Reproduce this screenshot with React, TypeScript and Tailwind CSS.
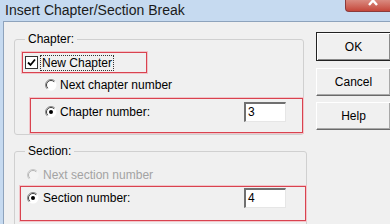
import React from "react";

function Radio({ checked = false, disabled = false }: { checked?: boolean; disabled?: boolean }) {
  return (
    <svg width="12" height="12" viewBox="0 0 12 12" className="shrink-0">
      <circle cx="6" cy="6" r="5.5" fill={disabled ? "#f4f4f4" : "#ffffff"} />
      <path d="M2.1 9.9 A5.5 5.5 0 0 1 9.9 2.1" stroke={disabled ? "#c8c8c8" : "#8a8a8a"} fill="none" />
      <path d="M2.8 9.2 A4.5 4.5 0 0 1 9.2 2.8" stroke={disabled ? "#b4b4b4" : "#404040"} fill="none" />
      {checked && <circle cx="6" cy="6" r="2" fill="#000" />}
    </svg>
  );
}

function Field({ value, right }: { value: string; right: string }) {
  return (
    <div
      className={
        "ml-auto w-[42px] h-[20px] bg-white border-t-2 border-l-2 border-r border-b border-t-[#707070] border-l-[#707070] border-r-[#e6e6e6] border-b-[#e6e6e6] pl-[2px] text-[12px] leading-[17px] " +
        right
      }
    >
      {value}
    </div>
  );
}

export default function App() {
  return (
    <div className="w-[390px] h-[224px] overflow-hidden flex flex-col bg-[#c6daf0] font-['Liberation_Sans',Arial,sans-serif] text-black">
      {/* title bar */}
      <div className="h-[21px] flex shrink-0">
        <div className="pl-[5px] text-[14px] leading-[21px] text-[#1a1a1a]">Insert Chapter/Section Break</div>
        <div className="ml-auto w-[45px] h-[12px] rounded-bl-[4px] border-l border-b border-[#8c3a3a] bg-gradient-to-b from-[#d98a80] to-[#c4463a] overflow-hidden">
          <svg width="45" height="12" viewBox="0 0 45 12">
            <path d="M23 -4 L31 5 M31 -4 L23 5" stroke="#fff" strokeWidth="2.4" />
          </svg>
        </div>
      </div>

      {/* body */}
      <div className="flex-1 ml-[3px] border-l border-t border-[#8ea3bc] bg-[#f0f0f0] flex text-[12px]">
        <div className="pl-[10px] pt-[10px] flex flex-col">
          <fieldset className="w-[288px] h-[103px] border border-[#d0d0d0] rounded-[3px] pl-[7px] pt-[6px]">
            <legend className="ml-[3px] px-[3px] leading-[14px]">Chapter:</legend>
            <div className="w-[125px] h-[21px] border border-[#d9424f] shadow-[0_0_0_1px_#f2c4c9] flex items-center pl-[2px]">
              <div className="w-[13px] h-[13px] bg-white border border-[#333] flex items-center justify-center">
                <svg width="9" height="9" viewBox="0 0 9 9">
                  <path d="M1 4.5 L3.5 7 L8 1.5" stroke="#000" strokeWidth="1.8" fill="none" />
                </svg>
              </div>
              <span className="ml-[3px] px-[1px] outline outline-1 outline-dotted outline-[#333] leading-[14px]">New Chapter</span>
            </div>
            <div className="mt-[2px] h-[20px] flex items-center ml-[23px] gap-[3px]">
              <Radio />
              <span>Next chapter number</span>
            </div>
            <div className="mt-[3px] ml-[8px] w-[273px] h-[35px] border border-[#d9424f] shadow-[0_0_0_1px_#f2c4c9] pt-[3px]">
              <div className="h-[20px] flex items-center pl-[14px] gap-[3px]">
                <Radio checked />
                <span>Chapter number:</span>
                <Field value="3" right="mr-[16px]" />
              </div>
            </div>
          </fieldset>

          <fieldset className="mt-[9px] w-[287px] h-[86px] border border-[#d0d0d0] rounded-[3px] pl-[5px] pt-[7px]">
            <legend className="ml-[5px] px-[3px] leading-[14px]">Section:</legend>
            <div className="h-[20px] flex items-center ml-[7px] gap-[4px] text-[#a3a3a3]">
              <Radio disabled />
              <span>Next section number</span>
            </div>
            <div className="mt-[1px] w-[286px] h-[35px] border border-[#d9424f] shadow-[0_0_0_1px_#f2c4c9] pt-[1px]">
              <div className="h-[20px] flex items-center pl-[6px] gap-[4px]">
                <Radio checked />
                <span>Section number:</span>
                <Field value="4" right="mr-[19px]" />
              </div>
            </div>
          </fieldset>
        </div>

        <div className="ml-[9px] pt-[10px] flex flex-col">
          <button className="w-[75px] h-[29px] border border-[#222] bg-[#f0f0f0] shadow-[inset_1px_1px_0_#fff,inset_-1px_-1px_0_#8a8a8a] text-[12px]">
            OK
          </button>
          <button className="mt-[7px] w-[75px] h-[28px] border border-t-white border-l-white border-r-[#6a6a6a] border-b-[#6a6a6a] bg-[#f0f0f0] shadow-[inset_-1px_-1px_0_#a8a8a8] text-[12px]">
            Cancel
          </button>
          <button className="mt-[6px] w-[75px] h-[28px] border border-t-white border-l-white border-r-[#6a6a6a] border-b-[#6a6a6a] bg-[#f0f0f0] shadow-[inset_-1px_-1px_0_#a8a8a8] text-[12px]">
            Help
          </button>
        </div>
      </div>
    </div>
  );
}
